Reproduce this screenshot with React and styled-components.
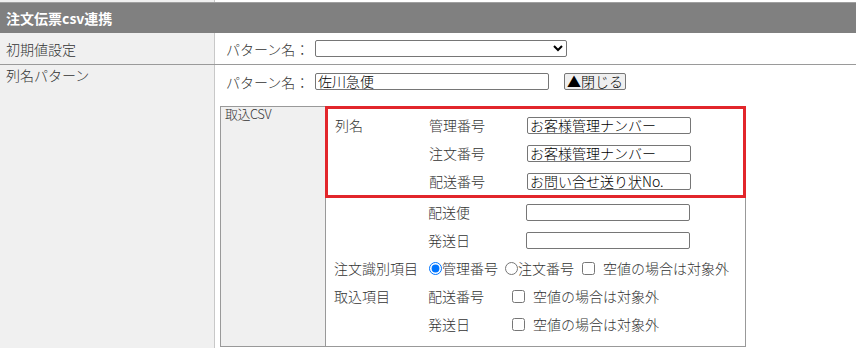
import React from 'react';
import styled, { createGlobalStyle } from 'styled-components';

const GlobalStyle = createGlobalStyle`
  body {
    margin: 0;
    background: #ffffff;
    color: #333333;
    font-family: "Noto Sans CJK JP", "Noto Sans", sans-serif;
    font-size: 14px;
    font-weight: 300;
  }
`;

const Page = styled.div`
  width: 856px;
  height: 348px;
  overflow: hidden;
`;

const TopStrip = styled.div`
  display: flex;
  height: 2px;
`;

const StripLeft = styled.div`
  width: 214px;
  background: #f0f0f0;
  border-right: 1px solid #c8c8c8;
`;

const Header = styled.div`
  height: 30px;
  border-top: 1px solid #a0a0a0;
  background: #808080;
  color: #ffffff;
  font-weight: bold;
  display: flex;
  align-items: center;
  padding-left: 6px;
`;

const Row = styled.div`
  display: flex;
  height: ${(p) => (p.$tall ? 'auto' : '31px')};
  min-height: ${(p) => (p.$tall ? '290px' : '0')};
`;

const Divider = styled.div`
  height: 1px;
  background: #9a9a9a;
`;

const HeadCell = styled.div`
  width: 208px;
  flex-shrink: 0;
  background: #f0f0f0;
  border-right: 1px solid #c8c8c8;
  padding-left: 6px;
  display: flex;
  align-items: ${(p) => (p.$top ? 'flex-start' : 'center')};
  line-height: 20px;
  color: #333333;
`;

const BodyCell = styled.div`
  flex: 1;
  padding: ${(p) => (p.$top ? '8px 0 8px 5px' : '0 0 0 5px')};
  display: flex;
  flex-direction: column;
  justify-content: ${(p) => (p.$top ? 'flex-start' : 'center')};
`;

const FieldLine = styled.div`
  display: flex;
  align-items: center;
  height: 17px;
  padding-left: 6px;
`;

const FieldLabel = styled.span`
  width: 89px;
  flex-shrink: 0;
`;

const Select = styled.select`
  width: 252px;
  height: 17px;
  box-sizing: border-box;
  border: 1px solid #767676;
  border-radius: 2px;
  background: #ffffff;
  font-size: 12px;
  padding: 0;
`;

const TextInput = styled.input`
  width: ${(p) => p.$w || 164}px;
  height: 17px;
  box-sizing: border-box;
  border: 1px solid #767676;
  border-radius: 2px;
  padding: 0 2px 1px;
  font-family: "Noto Sans CJK JP", sans-serif;
  font-size: 14px;
  font-weight: 300;
  line-height: 14px;
  color: #000000;
  background: #ffffff;
`;

const CloseButton = styled.button`
  margin-left: 15px;
  height: 17px;
  padding: 0 2px;
  border: 1px solid #767676;
  border-radius: 2px;
  background: #efefef;
  font-family: "Noto Sans CJK JP", sans-serif;
  font-size: 14px;
  font-weight: 300;
  line-height: 13px;
  color: #000000;
`;

const InnerTable = styled.div`
  display: flex;
  margin-top: 16px;
`;

const InnerHead = styled.div`
  width: 105px;
  box-sizing: border-box;
  background: #f0f0f0;
  border: 1px solid #999999;
  border-right: none;
  padding: 0 0 0 4px;
  font-size: 13px;
  line-height: 14px;
  letter-spacing: -0.5px;
`;

const InnerBody = styled.div`
  width: 421px;
  box-sizing: border-box;
  border: 1px solid #999999;
  padding-bottom: 8px;
`;

const Highlight = styled.div`
  margin: -1px -1px 0 -1px;
  border: 3px solid #e2262b;
  padding-top: 2px;
`;

const ItemRow = styled.div`
  display: flex;
  align-items: center;
  height: 28px;
  padding-left: ${(p) => (p.$inBox ? 7 : 8)}px;
`;

const GroupLabel = styled.span`
  width: 94px;
  flex-shrink: 0;
`;

const ItemLabel = styled.span`
  width: ${(p) => p.$w || 98}px;
  flex-shrink: 0;
`;

const Radio = styled.input.attrs({ type: 'radio' })`
  width: 13px;
  height: 13px;
  margin: 0 0 0 ${(p) => p.$ml || 1}px;
`;

const Check = styled.input.attrs({ type: 'checkbox' })`
  width: 13px;
  height: 13px;
  margin: 0 8px 0 ${(p) => p.$ml || 0}px;
`;

const Option = styled.span`
  white-space: nowrap;
`;

const mapped = [
  { label: '列名', name: '管理番号', value: 'お客様管理ナンバー' },
  { label: '', name: '注文番号', value: 'お客様管理ナンバー' },
  { label: '', name: '配送番号', value: 'お問い合せ送り状No.' },
];

const App = () => (
  <Page>
    <GlobalStyle />
    <TopStrip>
      <StripLeft />
    </TopStrip>
    <Header>注文伝票csv連携</Header>
    <Row>
      <HeadCell>初期値設定</HeadCell>
      <BodyCell>
        <FieldLine>
          <FieldLabel>パターン名：</FieldLabel>
          <Select defaultValue="">
            <option value=""></option>
          </Select>
        </FieldLine>
      </BodyCell>
    </Row>
    <Divider />
    <Row $tall>
      <HeadCell $top>列名パターン</HeadCell>
      <BodyCell $top>
        <FieldLine>
          <FieldLabel>パターン名：</FieldLabel>
          <TextInput $w={234} defaultValue="佐川急便" />
          <CloseButton type="button">▲閉じる</CloseButton>
        </FieldLine>
        <InnerTable>
          <InnerHead>取込CSV</InnerHead>
          <InnerBody>
            <Highlight>
              {mapped.map((m) => (
                <ItemRow $inBox key={m.name}>
                  <GroupLabel>{m.label}</GroupLabel>
                  <ItemLabel>{m.name}</ItemLabel>
                  <TextInput defaultValue={m.value} />
                </ItemRow>
              ))}
            </Highlight>
            <ItemRow>
              <GroupLabel />
              <ItemLabel>配送便</ItemLabel>
              <TextInput defaultValue="" />
            </ItemRow>
            <ItemRow>
              <GroupLabel />
              <ItemLabel>発送日</ItemLabel>
              <TextInput defaultValue="" />
            </ItemRow>
            <ItemRow>
              <GroupLabel>注文識別項目</GroupLabel>
              <Radio name="key" defaultChecked />
              <Option>管理番号</Option>
              <Radio name="key" $ml={7} />
              <Option>注文番号</Option>
              <Check $ml={8} />
              <Option>空値の場合は対象外</Option>
            </ItemRow>
            <ItemRow>
              <GroupLabel>取込項目</GroupLabel>
              <ItemLabel $w={84}>配送番号</ItemLabel>
              <Check />
              <Option>空値の場合は対象外</Option>
            </ItemRow>
            <ItemRow>
              <GroupLabel />
              <ItemLabel $w={84}>発送日</ItemLabel>
              <Check />
              <Option>空値の場合は対象外</Option>
            </ItemRow>
          </InnerBody>
        </InnerTable>
      </BodyCell>
    </Row>
  </Page>
);

export default App;
